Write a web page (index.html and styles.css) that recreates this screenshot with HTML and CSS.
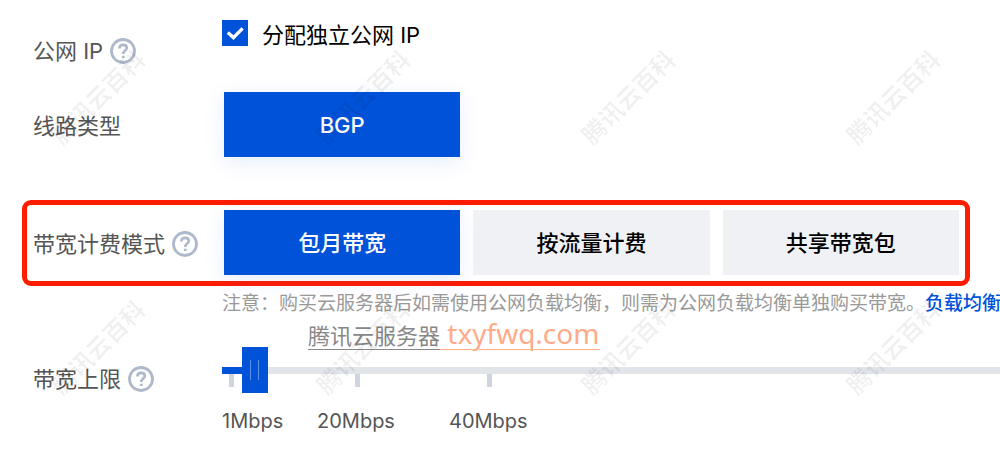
FILE: index.html
```html
<!DOCTYPE html>
<html lang="zh-CN">
<head>
<meta charset="utf-8">
<meta name="viewport" content="width=device-width, initial-scale=1">
<title>公网带宽</title>
<link rel="stylesheet" href="styles.css">
</head>
<body>
<svg class="defs" aria-hidden="true">
  <symbol id="help" viewBox="0 0 26 26">
    <circle cx="13" cy="13" r="11.5" fill="none" stroke="currentColor" stroke-width="2.8"/>
    <path d="M9.4 10.4C9.4 8.2 10.9 6.9 13.1 6.9C15.3 6.9 16.8 8.2 16.8 10C16.8 12.4 13.2 12.7 13.2 15.9" fill="none" stroke="currentColor" stroke-width="2.6"/>
    <path d="M11.9 17.7h2.7v2.3h-2.7z" fill="currentColor"/>
  </symbol>
</svg>
<form class="form">
  <div class="row row-ip">
    <div class="label"><span>公网 IP</span><button type="button" class="help" aria-label="公网 IP 说明"><svg><use href="#help"/></svg></button></div>
    <label class="check">
      <span class="check-box"><input type="checkbox" checked><svg viewBox="0 0 26 26" aria-hidden="true"><path d="M5.8 12.6L11.4 17.6L20.6 8.4" fill="none" stroke="#fff" stroke-width="3.4"/></svg></span>
      <span>分配独立公网 IP</span>
    </label>
  </div>
  <div class="row">
    <div class="label"><span>线路类型</span></div>
    <div class="options"><button type="button" class="option selected">BGP</button></div>
  </div>
  <div class="row row-marked">
    <div class="label"><span>带宽计费模式</span><button type="button" class="help" aria-label="带宽计费模式说明"><svg><use href="#help"/></svg></button></div>
    <div class="options">
      <button type="button" class="option selected">包月带宽</button>
      <button type="button" class="option">按流量计费</button>
      <button type="button" class="option">共享带宽包</button>
    </div>
  </div>
  <div class="note-area">
    <p class="note">注意：购买云服务器后如需使用公网负载均衡，则需为公网负载均衡单独购买带宽。<a href="#">负载均衡计费</a></p>
    <p class="credit">腾讯云服务器<a href="#"> txyfwq.com</a></p>
  </div>
  <div class="row row-limit">
    <div class="label"><label for="limit">带宽上限</label><button type="button" class="help" aria-label="带宽上限说明"><svg><use href="#help"/></svg></button></div>
    <div class="slider">
      <input id="limit" type="range" min="1" max="114" value="4">
      <ul class="scale">
        <li>1Mbps</li>
        <li>20Mbps</li>
        <li>40Mbps</li>
      </ul>
    </div>
  </div>
</form>
<div class="watermark" aria-hidden="true">
  <span>腾讯云百科</span><span>腾讯云百科</span><span>腾讯云百科</span><span>腾讯云百科</span>
  <span>腾讯云百科</span><span>腾讯云百科</span><span>腾讯云百科</span><span>腾讯云百科</span>
</div>
</body>
</html>
```
FILE: styles.css
```css
* { box-sizing: border-box; }

body {
  position: relative;
  margin: 0;
  overflow: hidden;
  background: #fff;
  color: #000;
  font: 22px/30px Inter, "Noto Sans CJK SC", sans-serif;
}

button {
  margin: 0;
  padding: 0;
  border: 0;
  font: inherit;
}

.defs { position: absolute; width: 0; height: 0; }

.form { padding: 20px 0; }

.row {
  display: grid;
  grid-template-columns: 189px 1fr;
  align-items: center;
  padding: 0 41px 0 33px;
}

.row-ip { align-items: start; padding-bottom: 26px; }
.row-ip .label { padding-top: 16px; }

.row-marked {
  margin: 43px 30px 0 22px;
  padding: 5px 6px 6px;
  border: 5px solid #ff1c00;
  border-radius: 9px;
}

.label {
  display: flex;
  align-items: center;
  gap: 7px;
  padding-top: 2px;
  color: #555;
  white-space: nowrap;
}

.help {
  width: 26px;
  height: 26px;
  background: none;
  color: #adb9ca;
}

.help svg { display: block; width: 26px; height: 26px; }

.check { display: flex; align-items: start; gap: 14px; height: 26px; }

.check-box { display: grid; width: 26px; height: 26px; }
.check-box > * { grid-area: 1 / 1; width: 26px; height: 26px; margin: 0; }
.check-box input { appearance: none; border: 1px solid #b6c0ce; }
.check-box input:checked { border: 0; background: #0052d9; }
.check-box svg { visibility: hidden; pointer-events: none; }
.check-box input:checked + svg { visibility: visible; }

.options {
  display: grid;
  grid-template-columns: repeat(3, 1fr);
  gap: 13px;
  padding-left: 2px;
}

.option {
  height: 65px;
  background: #f0f1f5;
  color: #000;
  font-weight: 500;
}

.option.selected {
  background: #0052d9;
  color: #fff;
  box-shadow: 0 5px 20px rgba(0, 82, 217, 0.1);
}

.note-area { position: relative; padding: 4px 0 0 222px; }

.note {
  margin: 0;
  color: #999;
  font-size: 19px;
  line-height: 28px;
  white-space: nowrap;
}

.note a { color: #0052d9; font-weight: 500; text-decoration: none; }

.credit {
  position: absolute;
  top: 29px;
  left: 308px;
  margin: 0;
  color: #888;
  line-height: 36px;
  text-decoration: underline 1px;
  text-underline-offset: 5px;
  white-space: nowrap;
}

.credit a {
  color: #ffab8a;
  font-family: "Noto Sans", sans-serif;
  font-size: 28px;
  text-decoration: underline 1px;
}

.row-limit { align-items: start; margin-top: 29px; padding-right: 0; }
.row-limit .label { padding-top: 17px; }

.slider input {
  display: block;
  appearance: none;
  width: 100%;
  height: 46px;
  margin: 0;
  background: linear-gradient(90deg, #0052d9 30px, #e1e4e9 30px) 0 20px / 100% 7px no-repeat;
}

.slider input::-webkit-slider-thumb {
  appearance: none;
  width: 26px;
  height: 46px;
  background:
    linear-gradient(#5b8fe8, #5b8fe8) 8px 13px / 1px 20px no-repeat,
    linear-gradient(#5b8fe8, #5b8fe8) 16px 13px / 1px 20px no-repeat,
    #0052d9;
}

.scale {
  display: grid;
  grid-template-columns: 95px 132px 1fr;
  margin: -19px 0 0;
  padding: 0;
  list-style: none;
  color: #555;
  font-size: 20px;
}

.scale li::before {
  content: "";
  display: block;
  width: 5px;
  height: 13px;
  margin: 0 0 19px 38px;
  background: #cfd5df;
}

.scale li:first-child::before { margin-left: 7px; }

.watermark {
  position: absolute;
  inset: -27px 0 0 -34px;
  display: grid;
  grid-template-columns: repeat(4, 265px);
  grid-auto-rows: 250px;
  place-items: center;
  color: rgba(0, 0, 0, 0.06);
  font-size: 24px;
  font-weight: 700;
  pointer-events: none;
}

.watermark span { transform: rotate(-45deg); }
```
